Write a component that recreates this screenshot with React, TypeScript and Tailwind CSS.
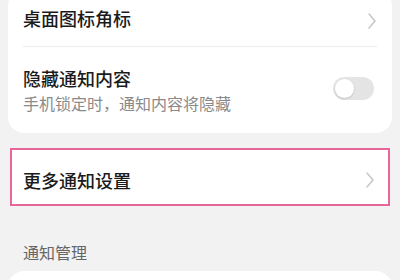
import React from "react";

const Chevron = () => (
  <svg width="10" height="18" viewBox="0 0 10 18" fill="none">
    <path d="M2 2 L8 9 L2 16" stroke="#c8c8c8" strokeWidth="1.6" strokeLinecap="round" strokeLinejoin="round" />
  </svg>
);

export default function App() {
  const font = { fontFamily: '"Noto Sans CJK SC", "Noto Sans", sans-serif' };
  return (
    <div className="w-[400px] h-[280px] overflow-hidden bg-[#f2f2f2]" style={font}>
      <div className="mx-[8px] -mt-[10px] bg-white rounded-[16px]">
        <div className="h-[56px] flex items-end pb-[16px] px-[15px] justify-between">
          <span className="text-[18px] leading-[24px] font-medium text-[#1b1b1b]">桌面图标角标</span>
          <Chevron />
        </div>
        <div className="mx-[15px] h-px bg-[#ececec]" />
        <div className="flex items-center justify-between px-[15px] pt-[19px] pb-[19px]">
          <div className="flex flex-col gap-[2px]">
            <span className="text-[18px] leading-[24px] font-medium text-[#1b1b1b]">隐藏通知内容</span>
            <span className="text-[16px] leading-[22px] text-[#8a8a8a]">手机锁定时，通知内容将隐藏</span>
          </div>
          <div className="w-[41px] h-[23px] rounded-full bg-[#e4e4e4] flex items-center px-[2px] -mt-[3px] mr-[3px]">
            <div className="w-[19px] h-[19px] rounded-full bg-white shadow-[0_1px_2px_rgba(0,0,0,0.15)]" />
          </div>
        </div>
      </div>
      <div className="mx-[10px] mt-[15px] h-[58px] border-2 border-[#e6669a] bg-white flex items-center justify-between pl-[11px] pr-[13px] pt-[6px]">
        <span className="text-[18px] leading-[24px] font-medium text-[#1b1b1b]">更多通知设置</span>
        <Chevron />
      </div>
      <div className="px-[23px] pt-[35px] pb-[8px] h-[65px]">
        <span className="block text-[16px] leading-[22px] text-[#666666]">通知管理</span>
      </div>
      <div className="mx-[8px] h-[40px] bg-white rounded-[16px]" />
    </div>
  );
}
